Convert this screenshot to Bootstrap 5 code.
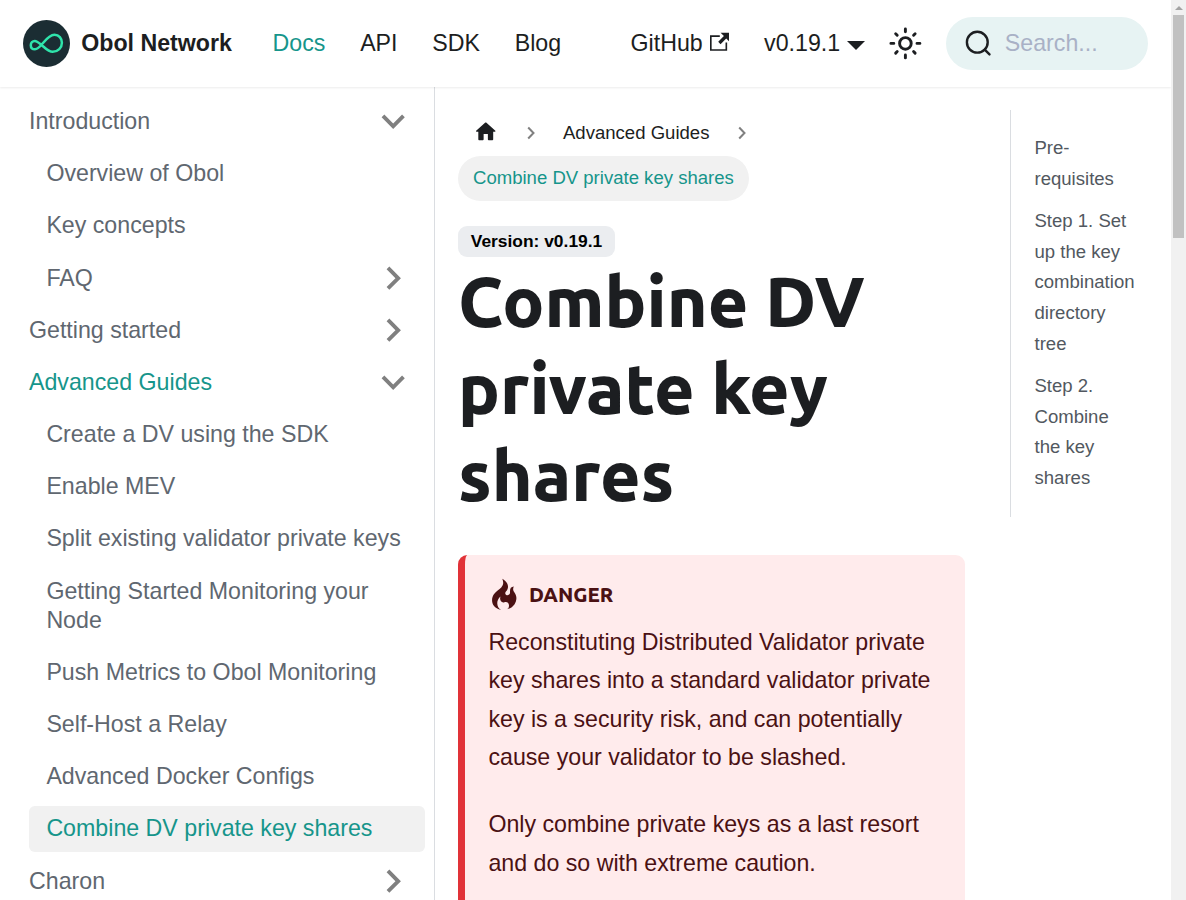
<!DOCTYPE html>
<html lang="en">
<head>
<meta charset="utf-8">
<title>Combine DV private key shares | Obol Network</title>
<meta name="viewport" content="width=device-width, initial-scale=1">
<link href="https://cdn.jsdelivr.net/npm/bootstrap@5.3.0/dist/css/bootstrap.min.css" rel="stylesheet">
<style>
:root { font-size: 23.2px; --teal: #16958b; --ink: #1c1e21; }
body { font-family: "Liberation Sans", Arial, sans-serif; font-size: 1rem; color: var(--ink); background: #fff; height: 900px; line-height: 1.65; }
a { color: inherit; text-decoration: none; }
.topbar { height: 87px; padding: 0 23.2px; box-shadow: 0 1px 2px rgba(0,0,0,.08); position: relative; z-index: 2; --bs-navbar-padding-y: 0; }
.topbar .navbar-nav .nav-link { color: var(--ink); padding: 0 17.4px; line-height: 1.25; }
.topbar .navbar-nav .nav-link.active, .side .active { color: var(--teal); }
.brand { font-weight: 700; line-height: 1.25; }
.caret { width: 0; border: 9px solid transparent; border-top-color: currentColor; border-bottom: 0; margin: 3px 0 0 7px; }
.find { width: 202px; height: 53px; background: #e7f3f3; color: #a9b1c6; padding-left: 19px; }
.side { width: 435px; border-right: 1px solid #dadde1; padding: 11.3px 9px 0 11.6px; color: #606770; }
.side a { display: flex; justify-content: space-between; align-items: center; line-height: 1.25; padding: 8.7px 17.4px; margin-bottom: 5.8px; min-height: 46.4px; border-radius: 5.8px; }
.side .sub { margin-left: 17.4px; }
.side .here { background: #f1f1f1; color: var(--teal); }
.side svg { width: 46.4px; height: 46.4px; fill: #808080; margin: -9px -9px -9px 0; }
.down { transform: rotate(180deg); }
.next { transform: rotate(90deg); }
.article { width: 507px; margin-left: 23px; padding-top: 24px; }
.crumbs { font-size: .8rem; line-height: 1; }
.crumbs > * { height: 45px; display: flex; align-items: center; padding: 0 15px; }
.crumbs svg { margin-bottom: 2px; }
.crumbs .sep { padding: 0; width: 26px; margin: 0; justify-content: center; }
.crumbs .pill { background: #f1f1f1; color: var(--teal); }
.version { margin-top: 25px; width: 157px; height: 31px; background: #ebedf0; border-radius: 9px; color: #000; font-size: 17.4px; font-weight: 700; line-height: 31px; text-align: center; }
.title { font: 800 69.6px/87px Ubuntu, "Noto Sans", sans-serif; margin: 1px 0 36px; }
.danger { --bs-alert-padding-x: 23.4px; --bs-alert-padding-y: 23.2px; background: #ffebec; color: #4b1113; border: 0 solid #e13238; border-left-width: 7.25px; border-radius: 9.3px; height: 420px; }
.danger h5 { font: 800 20.3px/25.4px Ubuntu, "Noto Sans", sans-serif; height: 33px; margin-bottom: 12px; }
.danger p { line-height: 38.28px; margin-bottom: 29px; }
.toc { width: 138px; height: 407px; margin: 23px 0 0 45px; padding: 23.4px 11.6px 0 23.5px; border-left: 1px solid #dadde1; font-size: .8rem; color: #525860; }
.toc a { display: block; line-height: 30.62px; margin-bottom: 11.6px; }
.scroller { width: 15px; background: #f1f1f1; padding: 6px 2px 0; }
.scroller .arrow { width: 0; margin: 0 auto 5px; border: 4px solid transparent; border-top: 0; border-bottom-color: #a3a3a3; }
.scroller .thumb { height: 223px; background: #c1c1c1; }
</style>
</head>
<body class="d-flex overflow-hidden">
<div class="flex-grow-1 d-flex flex-column overflow-hidden">
  <nav class="navbar topbar navbar-expand flex-nowrap flex-shrink-0">
    <a class="d-flex align-items-center brand text-nowrap" href="#">
      <svg width="47" height="47" viewBox="0 0 47 47" style="margin-right:11px"><circle cx="23.5" cy="23.5" r="23.5" fill="#1b2d33"/><path d="M18 24.500C15 22 13.500 20.900 11.800 20.900C9.500 20.900 7.800 22.700 7.800 25.200S9.500 29.300 12 29.300C18 29.300 23 14.800 31.500 14.800C36 14.800 38.900 18.500 38.900 22.700C38.900 27.800 35 31.800 29.700 31.800C25 31.800 22 27.800 18 24.500Z" fill="none" stroke="#2fe4ab" stroke-width="2.500"/></svg>
      <span>Obol Network</span>
    </a>
    <div class="navbar-nav" style="margin-left:23.2px">
      <a class="nav-link active" href="#">Docs</a><a class="nav-link" href="#">API</a><a class="nav-link" href="#">SDK</a><a class="nav-link" href="#">Blog</a>
    </div>
    <div class="navbar-nav ms-auto align-items-center">
      <a class="nav-link d-flex align-items-center" href="#">GitHub<svg width="19.600" height="19.600" viewBox="0 0 24 24" style="margin:0 0 3px 7px" fill="currentColor"><path d="M21 13v10h-21v-19h12v2h-10v15h17v-8h2zm3-12h-10.988l4.035 4-6.977 7.070 2.828 2.828 6.977-7.070 4.125 4.172v-11z"/></svg></a>
      <a class="nav-link d-flex align-items-center" href="#">v0.19.1<span class="caret"></span></a>
      <svg width="34.800" height="34.800" viewBox="0 0 24 24" fill="none" stroke="#1c1e21" stroke-width="2" stroke-linecap="round" style="margin:0 23px 0 5.500px"><circle cx="12" cy="12" r="4"/><path d="M2 12h2M20 12h2M12 2v2M12 20v2M5.290 5.290l1.060 1.060M17.650 17.650l1.060 1.060M18.710 5.290l-1.060 1.060M6.350 17.650l-1.060 1.060"/></svg>
      <div class="find rounded-pill d-flex align-items-center">
        <svg width="29" height="29" viewBox="0 0 29 29" fill="none" stroke="#1c1e21" stroke-width="2.400" stroke-linecap="round" style="margin-right:11px"><circle cx="12.300" cy="13.200" r="10.400"/><path d="M19.700 20.600L24.500 25.400"/></svg>
        <span>Search...</span>
      </div>
    </div>
  </nav>
  <div class="d-flex flex-grow-1 overflow-hidden align-items-start">
    <aside class="side flex-shrink-0 align-self-stretch">
      <a href="#">Introduction<svg class="down" viewBox="0 0 24 24"><path d="M7.410 15.410L12 10.830l4.590 4.580L18 14l-6-6-6 6z"/></svg></a>
      <a class="sub" href="#">Overview of Obol</a>
      <a class="sub" href="#">Key concepts</a>
      <a class="sub" href="#">FAQ<svg class="next" viewBox="0 0 24 24"><path d="M7.410 15.410L12 10.830l4.590 4.580L18 14l-6-6-6 6z"/></svg></a>
      <a href="#">Getting started<svg class="next" viewBox="0 0 24 24"><path d="M7.410 15.410L12 10.830l4.590 4.580L18 14l-6-6-6 6z"/></svg></a>
      <a class="active" href="#">Advanced Guides<svg class="down" viewBox="0 0 24 24"><path d="M7.410 15.410L12 10.830l4.590 4.580L18 14l-6-6-6 6z"/></svg></a>
      <a class="sub" href="#">Create a DV using the SDK</a>
      <a class="sub" href="#">Enable MEV</a>
      <a class="sub" href="#">Split existing validator private keys</a>
      <a class="sub" href="#">Getting Started Monitoring your Node</a>
      <a class="sub" href="#">Push Metrics to Obol Monitoring</a>
      <a class="sub" href="#">Self-Host a Relay</a>
      <a class="sub" href="#">Advanced Docker Configs</a>
      <a class="sub here" href="#">Combine DV private key shares</a>
      <a href="#">Charon<svg class="next" viewBox="0 0 24 24"><path d="M7.410 15.410L12 10.830l4.590 4.580L18 14l-6-6-6 6z"/></svg></a>
    </aside>
    <main class="article flex-shrink-0">
      <div class="crumbs d-flex flex-wrap">
        <a href="#" style="margin-right:4px"><svg width="25.500" height="25.500" viewBox="0 0 24 24" fill="currentColor" style="margin-bottom:3px"><path d="M10 19v-5h4v5c0 .55.45 1 1 1h3c.55 0 1-.45 1-1v-7h1.700c.46 0 .68-.57.33-.87L12.670 3.600c-.38-.34-.96-.34-1.340 0l-8.360 7.530c-.34.3-.13.87.33.87H5v7c0 .55.45 1 1 1h3c.55 0 1-.45 1-1z"/></svg></a>
        <span class="sep"><svg width="8" height="14" viewBox="0 0 8 14" fill="none" stroke="#808080" stroke-width="2"><path d="M1.200 1.500L6.500 7L1.200 12.500"/></svg></span>
        <a href="#" style="margin:0 4.500px">Advanced Guides</a>
        <span class="sep"><svg width="8" height="14" viewBox="0 0 8 14" fill="none" stroke="#808080" stroke-width="2"><path d="M1.200 1.500L6.500 7L1.200 12.500"/></svg></span>
        <span class="pill rounded-pill">Combine DV private key shares</span>
      </div>
      <div class="version">Version: v0.19.1</div>
      <h1 class="title">Combine DV private key shares</h1>
      <div class="alert danger" role="alert">
        <h5 class="d-flex align-items-center"><svg width="32.500" height="32.500" viewBox="0 0 12 16" fill="currentColor" style="margin-right:8px"><path fill-rule="evenodd" d="M5.050.31c.81 2.170.41 3.380-.52 4.310C3.550 5.670 1.980 6.450.9 7.980c-1.450 2.050-1.700 6.530 3.530 7.700-2.200-1.160-2.670-4.520-.3-6.610-.61 2.030.53 3.330 1.940 2.860 1.390-.47 2.300.53 2.270 1.670-.02.78-.31 1.440-1.130 1.810 3.420-.59 4.780-3.420 4.780-5.560 0-2.840-2.530-3.220-1.250-5.610-1.520.13-2.030 1.130-1.890 2.750.09 1.080-1.020 1.800-1.860 1.330-.67-.41-.66-1.190-.06-1.780C8.180 5.310 8.680 2.450 5.050.32L5.030.3l.02.01z"/></svg>DANGER</h5>
        <p>Reconstituting Distributed Validator private key shares into a standard validator private key is a security risk, and can potentially cause your validator to be slashed.</p>
        <p>Only combine private keys as a last resort and do so with extreme caution.</p>
      </div>
    </main>
    <aside class="toc flex-shrink-0">
      <a href="#">Pre-requisites</a>
      <a href="#">Step 1. Set up the key combination directory tree</a>
      <a href="#">Step 2. Combine the key shares</a>
    </aside>
  </div>
</div>
<div class="scroller flex-shrink-0"><div class="arrow"></div><div class="thumb"></div></div>
<script src="https://cdn.jsdelivr.net/npm/bootstrap@5.3.0/dist/js/bootstrap.bundle.min.js"></script>
</body>
</html>
